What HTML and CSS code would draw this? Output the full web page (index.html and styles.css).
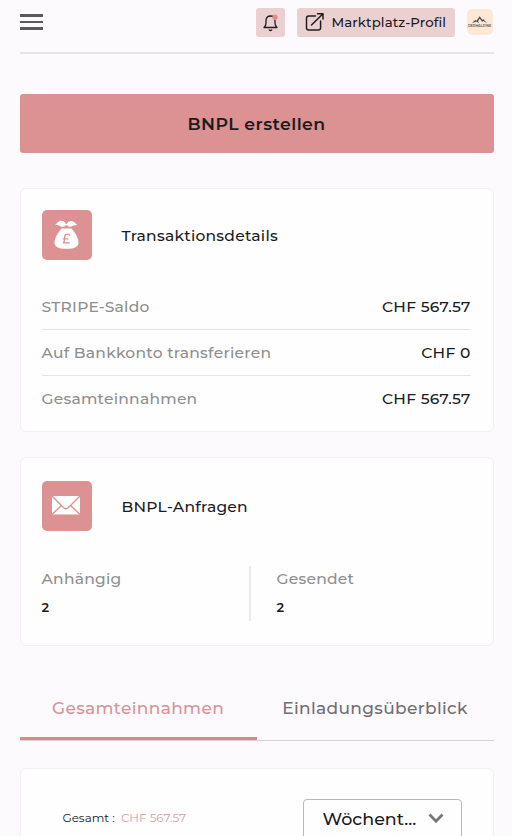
FILE: index.html
```
<!DOCTYPE html>
<html lang="de">
<head>
    <meta charset="UTF-8">
    <meta name="viewport" content="width=device-width, initial-scale=1.0">
    <title>Dashboard</title>
    <link rel="stylesheet" href="styles.css">
</head>
<body>
    <header class="topbar">
        <button class="menu-btn" aria-label="Menü">
            <span></span>
            <span></span>
            <span></span>
        </button>
        <div class="topbar-actions">
            <button class="bell-btn" aria-label="Benachrichtigungen">
                <svg width="29" height="29" viewBox="0 0 29 29" fill="none" stroke="#241c1d" stroke-width="1.3" stroke-linecap="round" stroke-linejoin="round">
                    <path d="M8 19.500h13c-1.400-1.300-2-2.600-2-4.300v-2.200c0-3.200-1.800-5-4.500-5s-4.500 1.800-4.500 5v2.200c0 1.700-.6 3-2 4.300z"/>
                    <path d="M13.300 22q1.200 1 2.400 0"/>
                    <circle cx="19" cy="9.300" r="2.700" fill="#e18d8f" stroke="none"/>
                </svg>
            </button>
            <button class="profile-btn">
                <svg width="20" height="20" viewBox="0 0 20 20" fill="none" stroke="#241c1d" stroke-width="1.500" stroke-linecap="round" stroke-linejoin="round">
                    <path d="M10.500 4H3.800C2.400 4 1.500 4.900 1.500 6.300v9.500c0 1.400.9 2.300 2.300 2.300h9.500c1.400 0 2.300-.9 2.300-2.300V9"/>
                    <path d="M6.500 13L18 1.700M12.500 1.700H18V7"/>
                </svg>
                <span>Marktplatz-Profil</span>
            </button>
            <div class="avatar">
                <svg width="15" height="8" viewBox="0 0 14 7" fill="#4f4650">
                    <path d="M0 6.500L3 3.600l1.200.5L7.200 0l2.300 3.300 1.200-.6L14 6.500l-3.300-2-1.200.7L7.200 2 5.600 4.600l1 1.900L4 5z"/>
                </svg>
                <span>DERMALPINE</span>
            </div>
        </div>
    </header>

    <button class="create-btn">BNPL erstellen</button>

    <section class="card transactions">
        <div class="card-head">
            <div class="card-icon">
                <svg width="49" height="49" viewBox="0 0 49 49" fill="#fff">
                    <path d="M24 14c-1.700-3.700-6-4.300-8.500-1.500-1 1.100-1.500 1.800-2.500 2.600 2.500-.4 3.800.2 5.600 1.300 1.500.9 3.500.6 5-1.100h1.700c1 1.600 2.600 2 4 1.200 2-1 3.500-1.200 6-1.400-1-.7-1.400-1.500-2.500-2.500-2.600-2.600-6.800-2-8 1.400z"/>
                    <path d="M19.500 18.400h10c3 3.500 7 9.300 7 14.100 0 4.200-3.500 6.300-12 6.300s-12-2.100-12-6.300c0-4.800 4-10.600 7-14.100z"/>
                    <path d="M28 25.600c-.5-1-1.400-1.500-2.500-1.500-1.800 0-2.900 1.200-2.900 3v2.200c0 1.900-.6 3-1.600 3.500h7M20.700 28.900h5.800" fill="none" stroke="#dc9293" stroke-width="1.300"/>
                </svg>
            </div>
            <h2 class="card-title">Transaktionsdetails</h2>
        </div>
        <dl class="rows">
            <div class="row">
                <dt>STRIPE-Saldo</dt>
                <dd>CHF 567.57</dd>
            </div>
            <div class="row">
                <dt>Auf Bankkonto transferieren</dt>
                <dd>CHF 0</dd>
            </div>
            <div class="row">
                <dt>Gesamteinnahmen</dt>
                <dd>CHF 567.57</dd>
            </div>
        </dl>
    </section>

    <section class="card requests">
        <div class="card-head">
            <div class="card-icon">
                <svg width="49" height="49" viewBox="0 0 49 49">
                    <path d="M10 15h28v18.500H10z" fill="#fff"/>
                    <path d="M10 15l11.500 11.600q2.500 2.400 5 0L38 15M10 33.500l9.500-9M38 33.500l-9.500-9" fill="none" stroke="#dc9293" stroke-width="1.400"/>
                </svg>
            </div>
            <h2 class="card-title">BNPL-Anfragen</h2>
        </div>
        <div class="stats">
            <div class="stat">
                <p class="stat-label">Anhängig</p>
                <p class="stat-value">2</p>
            </div>
            <div class="stat">
                <p class="stat-label">Gesendet</p>
                <p class="stat-value">2</p>
            </div>
        </div>
    </section>

    <nav class="tabs">
        <a class="tab active">Gesamteinnahmen</a>
        <a class="tab">Einladungsüberblick</a>
    </nav>

    <section class="card overview">
        <p class="total">Gesamt : <span>CHF 567.57</span></p>
        <div class="select">
            <span>Wöchent...</span>
            <svg width="16" height="11" viewBox="0 0 16 11" fill="none" stroke="#777" stroke-width="2.800">
                <path d="M1.500 1.500L8 8.200l6.500-6.700"/>
            </svg>
        </div>
    </section>
</body>
</html>
```
FILE: styles.css
```
* {
    box-sizing: border-box;
}
html {
    height: 100%;
    overflow: hidden;
}
body {
    font-family: Montserrat, Inter, sans-serif;
    margin: 0;
    padding: 0 18.500px 0 19.500px;
    height: 100%;
    overflow: hidden;
    background-color: #fcfafd;
    color: #1c1b1e;
}
button {
    font-family: inherit;
    color: inherit;
    border: none;
    padding: 0;
}
h2, p, dl, dd {
    margin: 0;
    font-weight: 400;
}

/* Top bar */
.topbar {
    display: flex;
    justify-content: space-between;
    height: 54px;
    padding-top: 8px;
    border-bottom: 2px solid #e6e4e7;
}
.menu-btn {
    display: flex;
    flex-direction: column;
    gap: 4px;
    width: 23.500px;
    height: 28px;
    padding-top: 6px;
    background: none;
}
.menu-btn span {
    height: 2.500px;
    width: 100%;
    background-color: #5c595c;
}
.topbar-actions {
    display: flex;
    align-items: flex-start;
}
.bell-btn {
    width: 29px;
    height: 29px;
    border-radius: 3px;
    background-color: #ebd0d2;
}
.bell-btn svg {
    display: block;
}
.profile-btn {
    display: flex;
    align-items: center;
    gap: 7px;
    width: 158px;
    height: 29px;
    margin-left: 12px;
    padding: 0 0 1px 8px;
    border-radius: 3px;
    background-color: #ebd0d2;
    font-size: 13.300px;
    font-weight: 500;
    letter-spacing: 0.100px;
    white-space: nowrap;
}
.avatar {
    display: flex;
    flex-direction: column;
    align-items: center;
    width: 26px;
    height: 26px;
    margin: 1px 1px 0 12px;
    padding-top: 7px;
    border-radius: 5px;
    background-color: #fde8d5;
}
.avatar span {
    font-size: 3.300px;
    font-weight: 600;
    line-height: 5px;
    color: #5f5558;
}

.create-btn {
    display: block;
    width: 100%;
    height: 59px;
    margin-top: 40px;
    padding-bottom: 1px;
    border-radius: 3px;
    background-color: #dc9293;
    font-size: 17.300px;
    font-weight: 600;
    letter-spacing: 0.450px;
}

/* Cards */
.card {
    border: 1px solid #f1eff2;
    border-radius: 6px;
    background-color: #fefefe;
}
.transactions {
    height: 244px;
    margin-top: 35px;
    padding: 21px 22px 21px 21px;
}
.requests {
    height: 189px;
    margin-top: 25px;
    padding: 23px 22px 23px 21px;
}
.card-head {
    display: flex;
    align-items: center;
    gap: 30px;
}
.card-icon {
    width: 50px;
    height: 50px;
    border-radius: 5px;
    background-color: #dc9293;
}
.card-title {
    font-size: 15.500px;
    font-weight: 500;
    letter-spacing: 0.250px;
}
.rows {
    margin-top: 23px;
}
.row {
    display: flex;
    justify-content: space-between;
    align-items: center;
    height: 46px;
    font-size: 15.500px;
    letter-spacing: 0.250px;
}
.row + .row {
    border-top: 1.500px solid #e5e5e6;
}
.row dt {
    font-weight: 500;
    color: #8e8e8f;
}
.row dd {
    font-weight: 500;
}
.stats {
    display: grid;
    grid-template-columns: 207px 1fr;
    height: 55px;
    margin-top: 35px;
}
.stat + .stat {
    padding-left: 26px;
    border-left: 2px solid #e9e9ea;
}
.stat-label {
    padding-top: 1px;
    font-size: 15.500px;
    font-weight: 500;
    line-height: 23px;
    letter-spacing: 0.250px;
    color: #8e8e8f;
}
.stat-value {
    margin-top: 7px;
    font-size: 13px;
    font-weight: 600;
    line-height: 20px;
}

/* Tabs */
.tabs {
    display: flex;
    height: 64px;
    margin-top: 31px;
    border-bottom: 1px solid #d5d3d6;
}
.tab {
    flex: 1;
    height: 63px;
    padding-top: 19px;
    font-size: 17px;
    font-weight: 500;
    line-height: 24px;
    letter-spacing: 0.350px;
    text-align: center;
    color: #706e72;
}
.tab.active {
    border-bottom: 3px solid #d48b8d;
    color: #d39598;
}

/* Overview */
.overview {
    display: flex;
    justify-content: space-between;
    height: 200px;
    margin-top: 27px;
    padding: 30px 31px 0 42px;
}
.total {
    padding-top: 9px;
    font-size: 11.900px;
    line-height: 20px;
}
.total span {
    margin-left: 3px;
    color: #d19ea4;
}
.select {
    display: flex;
    justify-content: space-between;
    align-items: center;
    width: 159px;
    height: 42px;
    padding: 0 17px 3px 19px;
    border: 1px solid #b9b9bb;
    border-radius: 4px;
    font-size: 17.500px;
    font-weight: 500;
}
```
